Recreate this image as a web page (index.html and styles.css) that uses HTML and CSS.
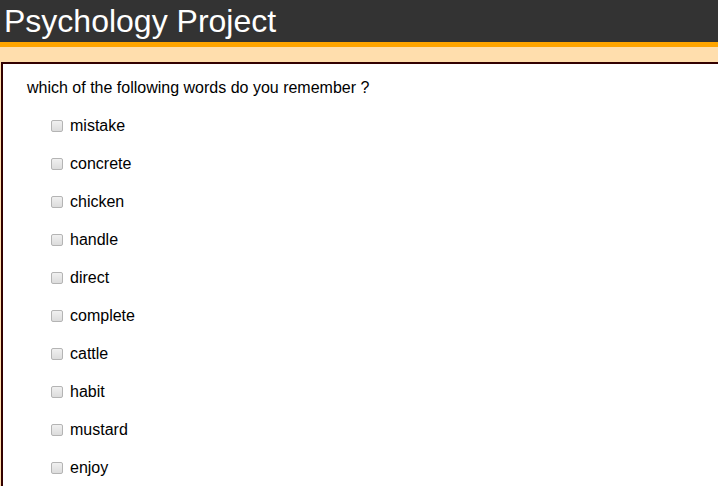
FILE: index.html
```html
<!DOCTYPE html>
<html>
<head>
<meta charset="utf-8">
<title>Psychology Project</title>
<link rel="stylesheet" href="styles.css">
</head>
<body>
<header class="topbar">
  <h1 class="title">Psychology Project</h1>
</header>
<div class="band">
  <div class="panel">
    <p class="question">which of the following words do you remember ?</p>
    <ul class="options">
      <li class="option"><label><input type="checkbox"> mistake</label></li>
      <li class="option"><label><input type="checkbox"> concrete</label></li>
      <li class="option"><label><input type="checkbox"> chicken</label></li>
      <li class="option"><label><input type="checkbox"> handle</label></li>
      <li class="option"><label><input type="checkbox"> direct</label></li>
      <li class="option"><label><input type="checkbox"> complete</label></li>
      <li class="option"><label><input type="checkbox"> cattle</label></li>
      <li class="option"><label><input type="checkbox"> habit</label></li>
      <li class="option"><label><input type="checkbox"> mustard</label></li>
      <li class="option"><label><input type="checkbox"> enjoy</label></li>
    </ul>
  </div>
</div>
</body>
</html>
```
FILE: styles.css
```css
html, body {
  margin: 0;
  padding: 0;
  background: #fff;
  font-family: "Liberation Sans", Arial, sans-serif;
  color: #000;
}
.topbar {
  background: #333333;
  height: 42px;
  border-bottom: 5px solid #ffa500;
}
.title {
  margin: 0;
  padding-left: 4px;
  font-size: 32px;
  font-weight: normal;
  line-height: 42px;
  color: #fff;
}
.band {
  background: #ffdead;
  padding-top: 15px;
}
.panel {
  margin-left: 1px;
  background: #fff;
  border-top: 2px solid #330000;
  border-left: 2px solid #330000;
  padding: 5px 24px 20px;
}
.question {
  margin: 0;
  font-size: 16px;
  line-height: 38px;
}
.options {
  list-style: none;
  margin: 0;
  padding: 0 0 0 20px;
}
.option {
  height: 38px;
  display: flex;
  align-items: center;
  font-size: 16px;
}
.option label {
  display: flex;
  align-items: center;
}
.option input {
  -webkit-appearance: none;
  appearance: none;
  box-sizing: border-box;
  width: 12px;
  height: 12px;
  margin: 0 7px 0 4px;
  border: 1px solid #b4b4b4;
  border-radius: 2px;
  background: linear-gradient(#f0f0f0, #dcdcdc);
}
```
